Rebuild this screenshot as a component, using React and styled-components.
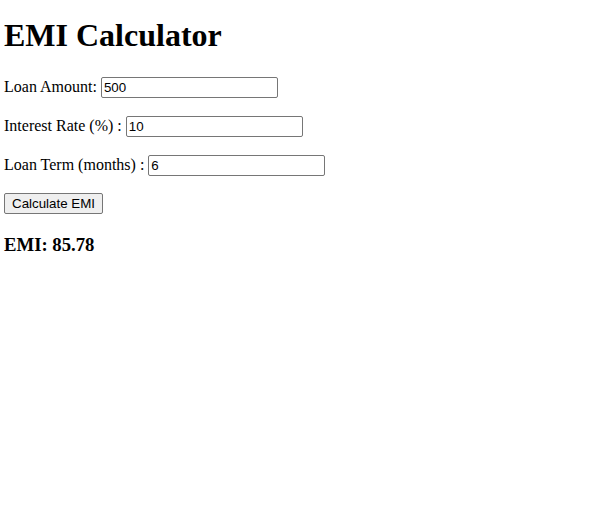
import React, { useState } from "react";
import styled, { createGlobalStyle } from "styled-components";

const GlobalStyle = createGlobalStyle`
  body {
    margin: 0;
    background: #ffffff;
    color: #000000;
    font-family: "Liberation Serif", "Times New Roman", serif;
    font-size: 16px;
  }
`;

function App() {
  const [amount, setAmount] = useState("500");
  const [rate, setRate] = useState("10");
  const [term, setTerm] = useState("6");
  const [emi, setEmi] = useState("85.78");

  const calculate = () => {
    const p = parseFloat(amount);
    const r = parseFloat(rate) / 12 / 100;
    const n = parseFloat(term);
    const value = (p * r * Math.pow(1 + r, n)) / (Math.pow(1 + r, n) - 1);
    setEmi(value.toFixed(2));
  };

  return (
    <Container>
      <GlobalStyle />
      <Title>EMI Calculator</Title>
      <Field>
        Loan Amount:{" "}
        <Input value={amount} onChange={(e) => setAmount(e.target.value)} />
      </Field>
      <Field>
        Interest Rate (%) :{" "}
        <Input value={rate} onChange={(e) => setRate(e.target.value)} />
      </Field>
      <Field>
        Loan Term (months) :{" "}
        <Input value={term} onChange={(e) => setTerm(e.target.value)} />
      </Field>
      <Button onClick={calculate}>Calculate EMI</Button>
      <Result>EMI: {emi}</Result>
    </Container>
  );
}

export default App;

const Container = styled.div`
  padding: 0 4px;
`;

const Title = styled.h1`
  font-size: 32px;
  font-weight: bold;
  margin: 17px 0 21.44px;
  line-height: normal;
`;

const Field = styled.p`
  margin: 16px 0;
  line-height: 23px;
`;

const Input = styled.input.attrs({ type: "text" })`
  box-sizing: border-box;
  width: 177px;
  height: 21px;
  padding: 1px 2px;
  border: 1px solid #767676;
  border-radius: 2px;
  font-family: "Liberation Sans", Arial, sans-serif;
  font-size: 13.333px;
  color: #000000;
  background: #ffffff;
  vertical-align: baseline;
`;

const Button = styled.button`
  box-sizing: border-box;
  height: 21px;
  margin-top: 1px;
  padding: 1px 7px;
  border: 1px solid #767676;
  border-radius: 2px;
  background: #efefef;
  font-family: "Liberation Sans", Arial, sans-serif;
  font-size: 13.333px;
  color: #000000;
  cursor: pointer;
`;

const Result = styled.h3`
  font-size: 18.72px;
  font-weight: bold;
  margin: 19.72px 0 18.72px;
`;
